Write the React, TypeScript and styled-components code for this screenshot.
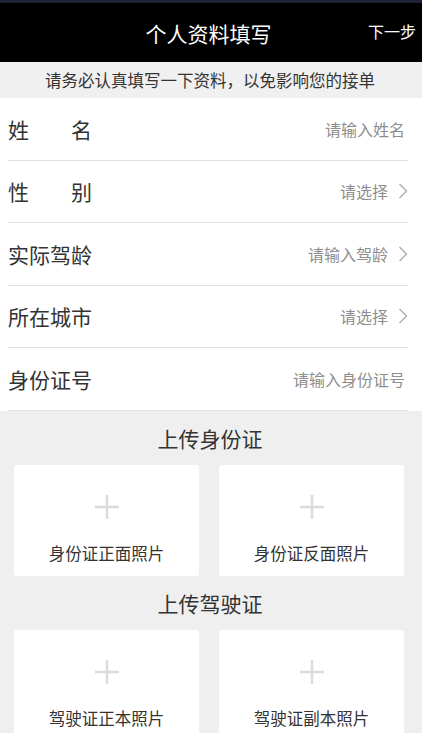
import React from "react";
import styled, { createGlobalStyle } from "styled-components";

const Global = createGlobalStyle`
  html, body { margin: 0; padding: 0; background: #efefef; }
  body { font-family: "Noto Sans CJK SC", "Noto Sans", sans-serif; }
  * { box-sizing: border-box; }
`;

const Page = styled.div`
  width: 422px;
  height: 733px;
  overflow: hidden;
  background: #efefef;
  display: flex;
  flex-direction: column;
  & > * { flex-shrink: 0; }
`;

const StatusStrip = styled.div`
  height: 3px;
  background: #1c2433;
`;

const Header = styled.header`
  height: 59px;
  background: #000;
  display: flex;
  align-items: center;
  justify-content: center;
  position: relative;
  color: #fff;
`;

const Title = styled.h1`
  margin: 0;
  font-size: 21px;
  font-weight: 400;
  line-height: 1;
  margin-right: 5px;
  margin-top: 2px;
`;

const NextBtn = styled.button`
  position: absolute;
  right: 6px;
  top: 20px;
  background: none;
  border: none;
  padding: 0;
  color: #fff;
  font-family: inherit;
  font-size: 16px;
  line-height: 1;
`;

const Notice = styled.div`
  height: 36px;
  display: flex;
  align-items: center;
  justify-content: center;
  font-size: 16.5px;
  color: #333;
  background: #f0f0f0;
  padding-right: 2px;
`;

const Form = styled.div`
  background: #fff;
  display: flex;
  flex-direction: column;
`;

const Row = styled.div`
  height: 62.5px;
  margin-left: 8px;
  margin-right: 14px;
  display: flex;
  align-items: center;
  justify-content: space-between;
  border-bottom: 1px solid #e2e2e2;
`;

const Label = styled.div<{ $spread?: boolean }>`
  font-size: 21px;
  color: #333;
  width: 84px;
  display: flex;
  justify-content: ${(p) => (p.$spread ? "space-between" : "flex-start")};
  white-space: nowrap;
`;

const Value = styled.div<{ $arrow?: boolean }>`
  display: flex;
  align-items: center;
  gap: 10px;
  font-size: 16px;
  color: #8e8e8e;
  padding-right: ${(p) => (p.$arrow ? "0" : "3px")};
`;

const Chevron = styled.svg`
  width: 10px;
  height: 16px;
`;

const SectionTitle = styled.h2`
  margin: 0;
  height: 54px;
  display: flex;
  align-items: center;
  justify-content: center;
  font-size: 21px;
  font-weight: 400;
  color: #333;
  padding-right: 2px;
`;

const CardGrid = styled.div`
  display: grid;
  grid-template-columns: 185px 185px;
  gap: 20px;
  padding: 0 18px 0 14px;
`;

const Card = styled.div`
  height: 111px;
  background: #fff;
  border-radius: 3px;
  display: flex;
  flex-direction: column;
  align-items: center;
  justify-content: flex-start;
`;

const Plus = styled.svg`
  width: 26px;
  height: 26px;
  margin-top: 29px;
`;

const CardLabel = styled.div`
  margin-top: 21px;
  font-size: 16.5px;
  color: #333;
`;

const rows: { label: string; spread?: boolean; value: string; arrow?: boolean }[] = [
  { label: "姓名", spread: true, value: "请输入姓名" },
  { label: "性别", spread: true, value: "请选择", arrow: true },
  { label: "实际驾龄", value: "请输入驾龄", arrow: true },
  { label: "所在城市", value: "请选择", arrow: true },
  { label: "身份证号", value: "请输入身份证号" },
];

const PlusIcon = () => (
  <Plus viewBox="0 0 26 26">
    <path d="M13 1v24M1 13h24" stroke="#dcdcdc" strokeWidth="2.5" fill="none" />
  </Plus>
);

const Upload = ({ title, items }: { title: string; items: string[] }) => (
  <>
    <SectionTitle>{title}</SectionTitle>
    <CardGrid>
      {items.map((it) => (
        <Card key={it}>
          <PlusIcon />
          <CardLabel>{it}</CardLabel>
        </Card>
      ))}
    </CardGrid>
  </>
);

export default function App() {
  return (
    <Page>
      <Global />
      <StatusStrip />
      <Header>
        <Title>个人资料填写</Title>
        <NextBtn>下一步</NextBtn>
      </Header>
      <Notice>请务必认真填写一下资料，以免影响您的接单</Notice>
      <Form>
        {rows.map((r) => (
          <Row key={r.label}>
            <Label $spread={r.spread}>
              {r.spread ? r.label.split("").map((c) => <span key={c}>{c}</span>) : r.label}
            </Label>
            <Value $arrow={r.arrow}>
              {r.value}
              {r.arrow && (
                <Chevron viewBox="0 0 10 16">
                  <path d="M1.5 1l7 7-7 7" stroke="#aaa" strokeWidth="1.3" fill="none" />
                </Chevron>
              )}
            </Value>
          </Row>
        ))}
      </Form>
      <Upload title="上传身份证" items={["身份证正面照片", "身份证反面照片"]} />
      <Upload title="上传驾驶证" items={["驾驶证正本照片", "驾驶证副本照片"]} />
    </Page>
  );
}
